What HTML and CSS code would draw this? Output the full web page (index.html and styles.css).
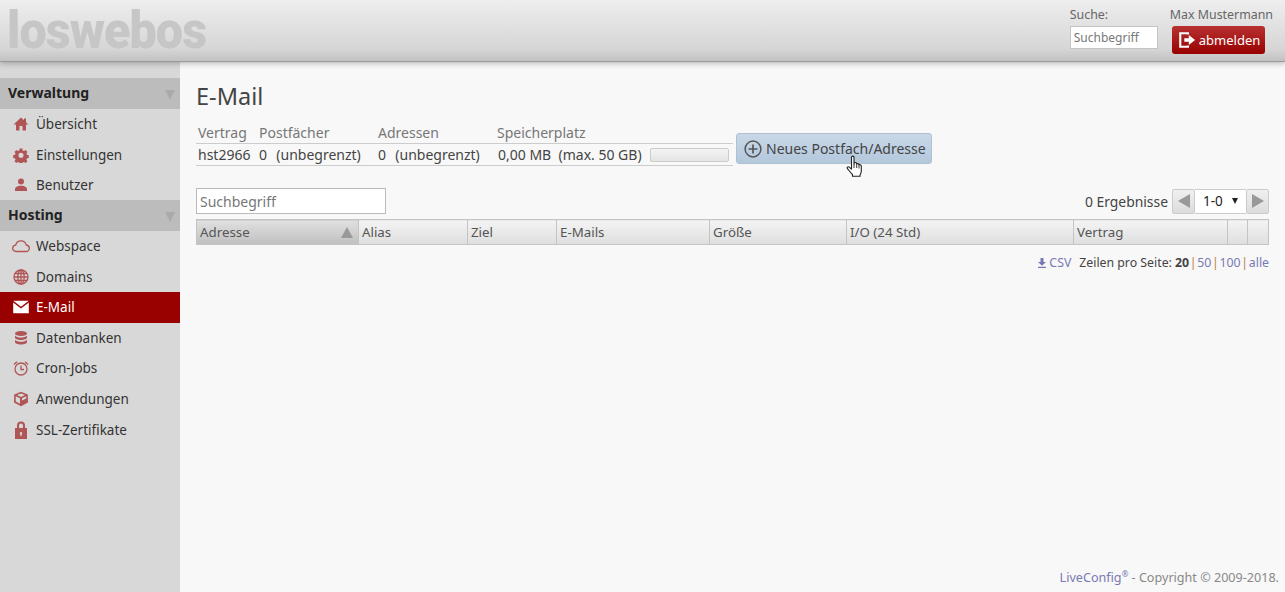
FILE: index.html
```html
<!DOCTYPE html>
<html lang="de">
<head>
<meta charset="utf-8">
<title>E-Mail</title>
<link rel="stylesheet" href="styles.css">
</head>
<body>
<header class="topbar">
  <div class="logo">loswebos</div>
  <div class="top-tools">
    <div class="top-search">
      <label class="top-label">Suche:</label>
      <input class="top-input" placeholder="Suchbegriff">
    </div>
    <div class="top-user">
      <div class="top-label">Max Mustermann</div>
      <a class="logout">
        <svg class="logout-icon" viewBox="0 0 20 20"><path d="M11 4V2.500H2.500v15H11V16" fill="none" stroke="#fff" stroke-width="2.400"/><path d="M7 8h5V4.500l7 5.500-7 5.500V12H7z" fill="#fff"/></svg>
        abmelden
      </a>
    </div>
  </div>
</header>
<div class="layout">
  <nav class="sidebar">
    <div class="nav-head">Verwaltung<span class="nav-arrow"></span></div>
    <a class="nav-item"><svg class="ico" viewBox="0 0 16 16"><path d="M8 1.500 0.500 8.500H3V14.500H6.500V10H9.500V14.500H13V8.500H15.500L13 6.200V2.500H11V4.300Z"/></svg>Übersicht</a>
    <a class="nav-item"><svg class="ico" viewBox="0 0 16 16"><path fill-rule="evenodd" d="M6.500 1h3l.4 2 1.400.6 1.800-1.100 2 2.100-1.100 1.700.6 1.500 2 .4v3l-2 .4-.6 1.400 1.100 1.800-2 2-1.800-1.100-1.400.6-.4 2h-3l-.4-2-1.400-.6-1.800 1.100-2-2 1.100-1.800-.6-1.400-2-.4v-3l2-.4.6-1.500-1.100-1.700 2-2.100 1.800 1.100 1.400-.6zM8 5.500a2.800 2.800 0 1 0 0 5.600 2.800 2.800 0 0 0 0-5.600z" transform="translate(.7 .7) scale(.91)"/></svg>Einstellungen</a>
    <a class="nav-item"><svg class="ico" viewBox="0 0 16 16"><circle cx="8" cy="4.500" r="3"/><path d="M2 14v-1.500C2 10 4.500 8.800 8 8.800s6 1.200 6 3.700V14z"/></svg>Benutzer</a>
    <div class="nav-head">Hosting<span class="nav-arrow"></span></div>
    <a class="nav-item"><svg class="ico ico-wide" viewBox="0 0 18 16"><path class="line" d="M5 13.500H4C2 13.500.7 12.100.7 10.400S2 7.300 3.700 7.200C4.200 4.500 6.300 2.800 9 2.800c2.600 0 4.700 1.700 5.200 4.200 1.800.2 3.100 1.700 3.100 3.300s-1.400 3.200-3.300 3.200z"/></svg>Webspace</a>
    <a class="nav-item"><svg class="ico" viewBox="0 0 16 16"><g class="line"><circle cx="8" cy="8" r="7"/><ellipse cx="8" cy="8" rx="3.200" ry="7"/><path d="M1 8h14M2 4.500h12M2 11.500h12M8 1v14"/></g></svg>Domains</a>
    <a class="nav-item active"><svg class="ico" viewBox="0 0 16 16"><path d="M.2 1.800h15.600L8 7.800z"/><path d="M.2 3.400v10.800h15.600V3.400L8 9.400z"/></svg>E-Mail</a>
    <a class="nav-item"><svg class="ico" viewBox="0 0 16 16"><ellipse cx="8" cy="3.500" rx="6" ry="2.500"/><path d="M2 5.500v2c0 1.400 2.700 2.500 6 2.500s6-1.100 6-2.500v-2c-1 1.400-3.500 2-6 2s-5-.6-6-2zM2 9.800v2.200c0 1.400 2.700 2.500 6 2.500s6-1.100 6-2.500V9.800c-1 1.400-3.500 2-6 2s-5-.6-6-2z"/></svg>Datenbanken</a>
    <a class="nav-item"><svg class="ico" viewBox="0 0 16 16"><g class="line"><circle cx="8" cy="9" r="6"/><path d="M8 5.500V9.500h3M1 4.500 4 1.800M15 4.500 12 1.800"/></g></svg>Cron-Jobs</a>
    <a class="nav-item"><svg class="ico" viewBox="0 0 16 16"><path fill-rule="evenodd" d="M8 .8 14.800 3.600 15 11.500 8 15.200 1 11.500 1.200 3.600zM8 2.500 4 4.100 8 6 12 4.100zM2.700 5.300 2.800 10.500 7 12.800V7.300zM9 7.300V9.500L13.200 7.400 13.300 5.300z"/></svg>Anwendungen</a>
    <a class="nav-item"><svg class="ico ico-tall" viewBox="0 0 16 20"><path fill-rule="evenodd" d="M4 8V5.500a4 4 0 0 1 8 0V8h2v11H2V8zM6 8h4V5.500a2 2 0 0 0-4 0zM8 12a1.300 1.300 0 0 0-.6 2.400V16h1.200v-1.600A1.300 1.300 0 0 0 8 12z"/></svg>SSL-Zertifikate</a>
  </nav>
  <main class="content">
    <h1 class="title">E-Mail</h1>
    <div class="summary">
      <table class="info">
        <thead>
          <tr><th class="i-a">Vertrag</th><th class="i-b">Postfächer</th><th class="i-b">Adressen</th><th class="i-c">Speicherplatz</th></tr>
        </thead>
        <tbody>
          <tr>
            <td>hst2966</td>
            <td class="count">0&nbsp; (unbegrenzt)</td>
            <td class="count">0&nbsp; (unbegrenzt)</td>
            <td><span class="storage">0,00 MB&nbsp; (max. 50 GB)<span class="progress"></span></span></td>
          </tr>
        </tbody>
      </table>
      <a class="add-btn">
        <svg class="add-icon" viewBox="0 0 18 18"><circle cx="9" cy="9" r="7.900" fill="none" stroke="#555" stroke-width="1.500"/><path d="M9 4.500v9M4.500 9h9" stroke="#555" stroke-width="1.700"/></svg>
        Neues Postfach/Adresse
      </a>
    </div>
    <div class="list-tools">
      <input class="list-search" placeholder="Suchbegriff">
      <div class="pager">
        <span class="result-count">0 Ergebnisse</span>
        <span class="pager-group">
          <span class="pager-btn"><span class="tri-left"></span></span>
          <span class="pager-select">1-0<span class="tri-down"></span></span>
          <span class="pager-btn"><span class="tri-right"></span></span>
        </span>
      </div>
    </div>
    <table class="grid">
      <thead>
        <tr>
          <th class="sorted c-addr">Adresse<span class="sort-arrow"></span></th>
          <th class="c-alias">Alias</th>
          <th class="c-ziel">Ziel</th>
          <th class="c-mails">E-Mails</th>
          <th class="c-size">Größe</th>
          <th class="c-io">I/O (24 Std)</th>
          <th class="c-contract">Vertrag</th>
          <th class="c-a"></th>
          <th class="c-b"></th>
        </tr>
      </thead>
    </table>
    <div class="list-foot">
      <a class="link csv"><svg class="csv-icon" viewBox="0 0 10 10"><path d="M3.500 0h3v4H9L5 7.800 1 4h2.500zM1 8.700h8V10H1z"/></svg>CSV</a>
      <span class="per-page">Zeilen pro Seite: <b>20</b><i>|</i><a class="link">50</a><i>|</i><a class="link">100</a><i>|</i><a class="link">alle</a></span>
    </div>
    <footer class="copyright"><a class="link">LiveConfig<sup>®</sup></a> - Copyright © 2009-2018.</footer>
  </main>
</div>
<svg class="cursor" viewBox="0 0 18 24"><path d="M5.500 2.200c0-1.500 2.500-1.500 2.500 0V9l.3-1.200c1.500-.6 2.300 0 2.400 1 1.200-.5 2.100 0 2.200 1 1.400-.4 2.400.2 2.400 1.500v4.700c0 1.500-.5 2.700-1.200 3.700v1.600H6.500v-1.800C4.800 18 3 15.500 1.500 13.700c-1-1.200.5-2.600 1.700-1.600l2.300 2z" fill="#fff" stroke="#222" stroke-width="1.100" stroke-linejoin="round"/><path d="M8 9v4M10.700 9v4M13 10v3.500" stroke="#222" stroke-width=".9" fill="none"/></svg>
</body>
</html>
```

FILE: styles.css
```css
* { box-sizing: border-box; }
html, body { height: 100%; }
body {
  margin: 0;
  background: #f8f8f8;
  color: #444;
  font-family: "Noto Sans", "Open Sans", sans-serif;
  font-size: 14px;
  overflow: hidden;
  position: relative;
}
.topbar {
  height: 62px;
  background: linear-gradient(#eeeeee, #d6d6d6 80%, #c2c2c2);
  border-bottom: 1px solid #9a9a9a;
  box-shadow: 0 1px 6px rgba(0,0,0,.3);
  display: flex;
  justify-content: space-between;
  position: relative;
  z-index: 2;
}
.logo {
  font-family: Roboto, sans-serif;
  font-weight: 900;
  font-size: 52px;
  line-height: 61px;
  letter-spacing: -1px;
  color: #c6c6c6;
  margin-left: 7px;
  white-space: nowrap;
  flex: none;
  transform: scaleX(.933);
  transform-origin: left center;
}
.top-tools { display: flex; gap: 12px; padding: 6px 12px 0 0; }
.top-label { font-size: 12.400px; line-height: 18px; color: #666; white-space: nowrap; }
.top-search { display: flex; flex-direction: column; }
.top-input {
  width: 88px; height: 23px; margin-top: 2px;
  border: 1px solid #c4c4c4; background: #fff;
  font: 12px "Noto Sans", sans-serif; padding: 0 3px;
}
.top-input::placeholder, .list-search::placeholder { color: #777; opacity: 1; }
.top-user { display: flex; flex-direction: column; align-items: flex-start; }
.logout {
  display: flex; align-items: center; gap: 3px;
  margin: 2px 0 0 2px;
  width: 93px; height: 28px; padding-left: 6px;
  background: linear-gradient(#b83232, #980000);
  border-radius: 3px;
  color: #fff; font-size: 13px;
}
.logout-icon { width: 18px; height: 18px; }
.layout { display: flex; height: calc(100% - 62px); }
.sidebar {
  width: 180px; flex: none;
  background: #d8d8d8;
  padding-top: 16.300px;
}
.nav-head {
  height: 30.550px;
  background: #bcbcbc;
  padding: 0 0 2px 8px;
  font-weight: 700; font-size: 14px; color: #222;
  display: flex; justify-content: space-between; align-items: center;
}
.nav-arrow {
  width: 0; height: 0; margin: 5px 5px 0 0;
  border-left: 5px solid transparent; border-right: 5px solid transparent;
  border-top: 10px solid #aaa;
}
.nav-item {
  height: 30.550px;
  display: flex; align-items: center;
  padding-left: 13px;
  color: #333; font-size: 13.500px;
}
.ico { width: 16px; height: 16px; margin-right: 7px; fill: #b05555; flex: none; }
.ico-tall { height: 20px; }
.ico-wide { width: 18px; margin-left: -1px; margin-right: 6px; }
.line { fill: none; stroke: #b05555; stroke-width: 1.300; }
.active { background: #990000; color: #fff; }
.active .ico { fill: #fff; }
.content { flex: 1; padding: 0 16px 0 16px; position: relative; min-width: 0; }
.title { margin: 0; padding-top: 18px; font-size: 23.500px; line-height: 32px; font-weight: 400; color: #444; }
.summary { display: flex; align-items: flex-start; margin-top: 5px; }
.info { border-collapse: collapse; table-layout: fixed; width: 537px; height: 33px; margin-top: 6px; }
.i-a { width: 61px; } .i-b { width: 119px; } .i-c { width: 238px; }
.info th { font-weight: 400; color: #777; text-align: left; padding: 0 2px; font-size: 14px; line-height: 20px; white-space: nowrap; }
.info td { border-top: 1px solid #ccc; border-bottom: 1px solid #ccc; padding: 0 2px; line-height: 21px; white-space: nowrap; color: #444; }
.info .count { word-spacing: 1px; }
.storage { display: flex; align-items: center; height: 21px; padding-left: 1px; }
.progress {
  display: inline-block; width: 79px; height: 14px; margin-left: 8px;
  border: 1px solid #ccc; border-radius: 2px;
  background: linear-gradient(#f4f4f4, #e4e4e4);
}
.add-btn {
  margin: 16px 0 0 3px;
  width: 196px; height: 31px;
  display: flex; align-items: center; gap: 4px; padding-left: 7px;
  border: 1px solid #b0c0d0; border-radius: 3px;
  background: linear-gradient(#c8d8e8, #b4c8dc);
  color: #444; font-size: 14px; white-space: nowrap;
}
.add-icon { width: 18px; height: 18px; flex: none; }
.list-tools { display: flex; justify-content: space-between; align-items: center; margin-top: 22px; height: 26px; }
.list-search {
  width: 190px; height: 26px; border: 1px solid #bbb; background: #fff;
  font: 14px "Noto Sans", sans-serif; padding: 0 3px;
}
.pager { display: flex; align-items: center; gap: 4px; }
.result-count { font-size: 13.900px; }
.pager-group { display: flex; height: 25px; }
.pager-btn {
  width: 23px; display: flex; align-items: center; justify-content: center;
  background: linear-gradient(#f0f0f0, #dcdcdc);
  border: 1px solid #ccc; border-radius: 2px;
}
.pager-select {
  width: 51px; background: #fff; border-top: 1px solid #ccc; border-bottom: 1px solid #ccc;
  color: #222; font-size: 13.500px; line-height: 23px; padding-left: 8px; position: relative;
}
.tri-left, .tri-right, .tri-down, .sort-arrow { display: inline-block; width: 0; height: 0; }
.tri-left { border-top: 7px solid transparent; border-bottom: 7px solid transparent; border-right: 12px solid #999; }
.tri-right { border-top: 7px solid transparent; border-bottom: 7px solid transparent; border-left: 12px solid #999; }
.tri-down {
  position: absolute; right: 8px; top: 8px;
  border-left: 3.500px solid transparent; border-right: 3.500px solid transparent; border-top: 6px solid #222;
}
.grid { border-collapse: collapse; table-layout: fixed; width: 1072px; margin-top: 5px; }
.grid th {
  height: 25px; padding: 0 3px;
  border: 1px solid #c4c4c4;
  background: linear-gradient(#f4f4f4, #dedede);
  color: #555; font-weight: 400; font-size: 13.300px; text-align: left; white-space: nowrap;
}
.grid th.sorted { background: linear-gradient(#e0e0e0, #c0c0c0); position: relative; }
.sort-arrow {
  position: absolute; right: 5px; top: 7px;
  border-left: 6px solid transparent; border-right: 6px solid transparent; border-bottom: 11px solid #999;
}
.c-addr { width: 162px; } .c-alias { width: 109px; } .c-ziel { width: 89px; }
.c-mails { width: 153px; } .c-size { width: 137px; } .c-io { width: 227px; }
.c-contract { width: 154px; } .c-a { width: 20px; } .c-b { width: 21px; }
.list-foot {
  display: flex; justify-content: flex-end; gap: 8px;
  margin-top: 9px; font-size: 12.300px; line-height: 17px; color: #444;
}
.link { color: #7878b4; }
.csv { display: flex; align-items: center; gap: 2px; }
.csv-icon { width: 10px; height: 10px; fill: #7878b4; }
.per-page i { font-style: normal; color: #c08040; margin: 0 .7px; }
.per-page b { color: #444; }
.copyright {
  position: absolute; right: 6px; bottom: 5px;
  font-size: 12.600px; line-height: 18px; color: #888;
}
.copyright sup { font-size: 8px; line-height: 0; }
.cursor { position: absolute; left: 846px; top: 155px; width: 18px; height: 24px; z-index: 3; }
```
